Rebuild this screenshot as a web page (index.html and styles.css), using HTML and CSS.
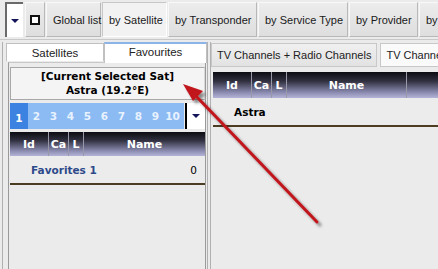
FILE: index.html
```html
<!doctype html>
<html lang="en">
  <head>
    <meta charset="utf-8">
    <title>Channel list</title>
    <link rel="stylesheet" href="styles.css">
  </head>
  <body>
    <div class="app">
      <div class="toolbar">
        <div class="tb-drop"><span class="tri"></span></div>
        <div class="tb-btn tb-check"><span class="box"></span></div>
        <div class="tb-btn w-global">Global list</div>
        <div class="tb-btn pressed w-sat">by Satellite</div>
        <div class="tb-btn w-trans">by Transponder</div>
        <div class="tb-btn w-service">by Service Type</div>
        <div class="tb-btn w-provider">by Provider</div>
        <div class="tb-btn">by Package</div>
      </div>

      <div class="main">
        <div class="left-pane">
          <div class="tabs">
            <div class="tab">Satellites</div>
            <div class="tab active">Favourites</div>
          </div>
          <div class="tab-body">
            <div class="sat-box">
              <div>[Current Selected Sat]</div>
              <div>Astra (19.2°E)</div>
            </div>
            <div class="pager">
              <div class="pages">
                <span class="page current">1</span>
                <span class="page">2</span>
                <span class="page">3</span>
                <span class="page">4</span>
                <span class="page">5</span>
                <span class="page">6</span>
                <span class="page">7</span>
                <span class="page">8</span>
                <span class="page">9</span>
                <span class="page">10</span>
              </div>
              <div class="pager-drop"><span class="tri"></span></div>
            </div>
            <div class="grid">
              <div class="grid-head">
                <div class="col c-id">Id</div>
                <div class="col c-ca">Ca</div>
                <div class="col c-l">L</div>
                <div class="col c-name">Name</div>
              </div>
              <div class="grid-row fav">
                <span>Favorites 1</span>
                <span class="count">0</span>
              </div>
            </div>
          </div>
        </div>

        <div class="right-pane">
          <div class="tabs right-tabs">
            <div class="tab plain">TV Channels + Radio Channels</div>
            <div class="tab plain white">TV Channels</div>
          </div>
          <div class="grid wide">
            <div class="grid-head">
              <div class="col c-id">Id</div>
              <div class="col c-ca">Ca</div>
              <div class="col c-l">L</div>
              <div class="col c-name2">Name</div>
              <div class="col c-more"></div>
            </div>
            <div class="grid-row sat">
              <span>Astra</span>
            </div>
          </div>
        </div>
      </div>

      <svg class="arrow" width="438" height="269" viewBox="0 0 438 269">
        <defs>
          <filter id="shadow" x="-20%" y="-20%" width="140%" height="140%">
            <feGaussianBlur in="SourceAlpha" stdDeviation="1.5"/>
            <feOffset dx="3" dy="3"/>
            <feComponentTransfer><feFuncA type="linear" slope="0.45"/></feComponentTransfer>
            <feMerge><feMergeNode/><feMergeNode in="SourceGraphic"/></feMerge>
          </filter>
        </defs>
        <g filter="url(#shadow)">
          <line x1="317" y1="222" x2="195" y2="95" stroke="#c0141c" stroke-width="3" stroke-linecap="round"/>
          <polygon points="183,84 203,91 193,101" fill="#c0141c"/>
        </g>
      </svg>
    </div>
  </body>
</html>
```

FILE: styles.css
```css
body {
  margin: 0;
  background: #ebebeb;
  font-family: "Liberation Sans", Arial, sans-serif;
  font-size: 11px;
  color: #000;
}

.app {
  position: relative;
  width: 438px;
  height: 269px;
  overflow: hidden;
  background: #ebebeb;
}

/* toolbar */
.toolbar {
  display: flex;
  gap: 1px;
  height: 37px;
  padding: 2px 0 0 5px;
  border-bottom: 1px solid #c8c8c8;
  white-space: nowrap;
}

.tb-drop {
  flex-shrink: 0;
  width: 16px;
  height: 33px;
  margin-right: 1px;
  background: #fff;
  border-left: 2px solid #6a6a6a;
  border-top: 2px solid #6a6a6a;
  display: flex;
  align-items: center;
  justify-content: center;
}

.tri {
  width: 0;
  height: 0;
  border-left: 4px solid transparent;
  border-right: 4px solid transparent;
  border-top: 4px solid #14145a;
}

.tb-btn {
  flex-shrink: 0;
  height: 33px;
  padding: 0 6px;
  display: flex;
  align-items: center;
  background: linear-gradient(#ececec, #dedede);
  border: 1px solid #f8f8f8;
  border-right-color: #b8b8b8;
  border-bottom-color: #b8b8b8;
  color: #1a1a1a;
}

.tb-btn.pressed {
  background: #f2f2f2;
  border-color: #c8c8c8 #fff #fff #c8c8c8;
}

.tb-check { padding: 0 4px; }
.w-global { width: 41px; }
.w-sat { width: 51px; }
.w-trans { width: 75px; }
.w-service { width: 76px; }
.w-provider { width: 55px; }

.box {
  width: 6px;
  height: 6px;
  border: 2px solid #111;
  background: #fff;
}

/* panes */
.main {
  display: flex;
  margin-top: 2px;
}

.left-pane {
  flex-shrink: 0;
  width: 203px;
  height: 227px;
  margin-left: 2px;
  padding-left: 1px;
  border-left: 1px solid #b0b0b0;
  border-right: 1px solid #b0b0b0;
  background: #ebebeb;
}

.tabs {
  display: flex;
  height: 20px;
  padding-left: 2px;
  white-space: nowrap;
}

.tab {
  flex-shrink: 0;
  width: 96px;
  height: 17px;
  margin-top: 1px;
  background: #fff;
  border: 1px solid #c0c0c0;
  border-bottom: none;
  text-align: center;
  line-height: 18px;
  font-size: 11.5px;
  color: #222;
}

.tab.active {
  width: 101px;
  margin-top: 0;
  height: 19px;
  border-top: 2px solid #8cb4e8;
  line-height: 16px;
}

.tab-body {
  margin-left: 4px;
  height: 205px;
  padding: 4px 0 0 0;
  border-left: 1px solid #9a9a9a;
  border-right: 1px solid #9a9a9a;
  border-top: 1px solid #c8c8c8;
  width: 196px;
}

.sat-box {
  height: 30px;
  margin: 0 0 0 1px;
  background: #f4f4f4;
  border: 1px solid #a8a8a8;
  border-right-color: #d8d8d8;
  font-family: "DejaVu Sans", Verdana, sans-serif;
  font-weight: bold;
  font-size: 10.5px;
  text-align: center;
  line-height: 14px;
  padding-top: 1px;
}

.pager {
  display: flex;
  height: 26px;
  margin: 3px 0 0 1px;
}

.pages {
  display: flex;
  width: 174px;
  background: #8cbaf2;
}

.page {
  width: 17px;
  color: #e8f2ff;
  font-family: "DejaVu Sans", Verdana, sans-serif;
  font-weight: bold;
  font-size: 10.5px;
  line-height: 27px;
  text-align: center;
}

.page.current {
  width: 18px;
  background: #3c82e0;
  color: #fff;
  padding-top: 2px;
  box-sizing: border-box;
}

.pager-drop {
  width: 18px;
  margin-left: 1px;
  background: #fff;
  border-left: 2px solid #000;
  display: flex;
  align-items: center;
  justify-content: center;
}

/* grids */
.grid {
  margin: 3px 0 0 1px;
}

.grid-head {
  display: flex;
  height: 24px;
  background: linear-gradient(#0c0c12 0%, #303040 35%, #8e8eb4 80%, #b4b4d8 100%);
  color: #fff;
  font-family: "DejaVu Sans", Verdana, sans-serif;
  font-weight: bold;
  font-size: 11px;
}

.col {
  flex-shrink: 0;
  display: flex;
  align-items: center;
  justify-content: center;
  border-right: 1px solid #9898a8;
}

.c-id { width: 38px; }
.c-ca { width: 19px; }
.c-l { width: 14px; }
.c-name { flex: 1; border-right: none; }
.c-name2 { width: 119px; }
.c-more { flex: 1; border-right: none; }

.grid-row {
  display: flex;
  height: 27px;
  align-items: center;
  background: #ececec;
  border-bottom: 2px solid #4c3c22;
  font-family: "DejaVu Sans", Verdana, sans-serif;
  font-weight: bold;
  font-size: 10.5px;
}

.fav {
  padding: 0 8px 0 21px;
  justify-content: space-between;
  color: #2c4a8a;
}

.count {
  font-weight: normal;
  color: #000;
}

.sat {
  padding-left: 21px;
}

.right-pane {
  flex: 1;
  min-width: 0;
  margin-left: 2px;
  border-left: 1px solid #b0b0b0;
  height: 227px;
  overflow: hidden;
}

.right-tabs {
  height: 26px;
  padding-left: 0;
  gap: 3px;
}

.tab.plain {
  width: auto;
  height: 22px;
  padding: 0 5px;
  margin-top: 1px;
  line-height: 22px;
  background: linear-gradient(#f0f0f0, #e2e2e2);
  border: 1px solid #c8c8c8;
  font-size: 11px;
}

.tab.white {
  background: #fafafa;
}

.wide {
  margin: 4px 0 0 2px;
  width: 240px;
}

.wide .grid-head {
  height: 26px;
}

/* overlay */
.arrow {
  position: absolute;
  left: 0;
  top: 0;
  pointer-events: none;
}
```
